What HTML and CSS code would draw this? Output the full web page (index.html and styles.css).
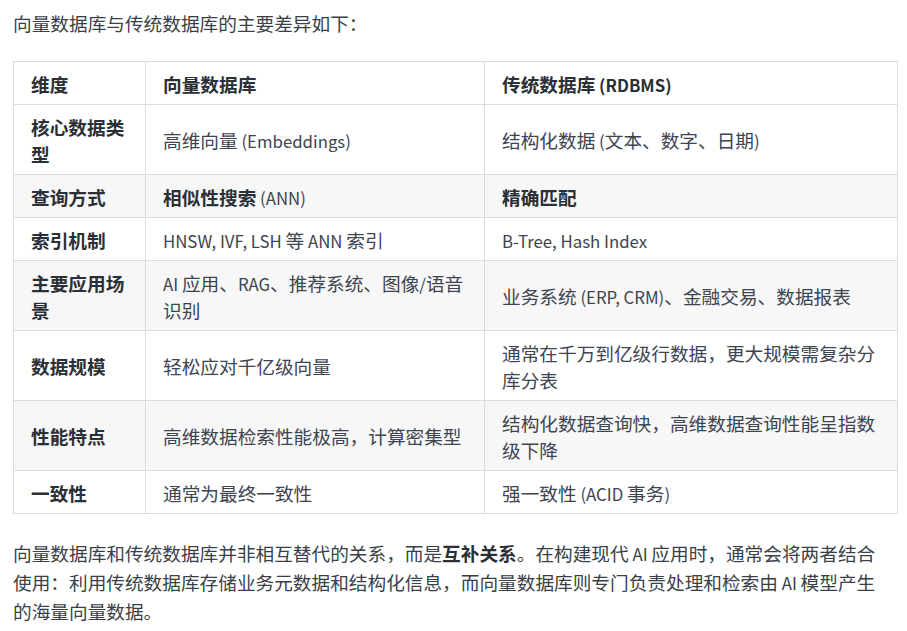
FILE: index.html
```html
<!DOCTYPE html>
<html lang="zh-CN">
<head>
<meta charset="utf-8">
<title>向量数据库与传统数据库</title>
<link rel="stylesheet" href="styles.css">
</head>
<body>
<div class="content">
  <p class="intro">向量数据库与传统数据库的主要差异如下：</p>
  <table class="compare">
    <colgroup>
      <col class="c1">
      <col class="c2">
      <col class="c3">
    </colgroup>
    <thead>
      <tr><th>维度</th><th>向量数据库</th><th>传统数据库<span class="lat"> (RDBMS)</span></th></tr>
    </thead>
    <tbody>
      <tr><td class="dim">核心数据类型</td><td>高维向量<span class="lat"> (Embeddings)</span></td><td>结构化数据<span class="lat"> (</span>文本、数字、日期<span class="lat">)</span></td></tr>
      <tr><td class="dim">查询方式</td><td><strong>相似性搜索</strong><span class="lat"> (ANN)</span></td><td><strong>精确匹配</strong></td></tr>
      <tr><td class="dim">索引机制</td><td><span class="lat">HNSW, IVF, LSH </span>等<span class="lat"> ANN </span>索引</td><td><span class="lat">B-Tree, Hash Index</span></td></tr>
      <tr><td class="dim">主要应用场景</td><td><span class="lat">AI </span>应用、<span class="lat">RAG</span>、推荐系统、图像<span class="lat">/</span>语音识别</td><td>业务系统<span class="lat"> (ERP, CRM)</span>、金融交易、数据报表</td></tr>
      <tr><td class="dim">数据规模</td><td>轻松应对千亿级向量</td><td>通常在千万到亿级行数据，更大规模需复杂分库分表</td></tr>
      <tr><td class="dim">性能特点</td><td>高维数据检索性能极高，计算密集型</td><td>结构化数据查询快，高维数据查询性能呈指数级下降</td></tr>
      <tr><td class="dim">一致性</td><td>通常为最终一致性</td><td>强一致性<span class="lat"> (ACID </span>事务<span class="lat">)</span></td></tr>
    </tbody>
  </table>
  <p class="outro">向量数据库和传统数据库并非相互替代的关系，而是<strong>互补关系</strong>。在构建现代<span class="lat"> AI </span>应用时，通常会将两者结合使用：利用传统数据库存储业务元数据和结构化信息，而向量数据库则专门负责处理和检索由<span class="lat"> AI </span>模型产生的海量向量数据。</p>
</div>
</body>
</html>
```

FILE: styles.css
```css
html, body {
  margin: 0;
  padding: 0;
  background: #ffffff;
}

body {
  font-family: "Noto Sans CJK SC", "Noto Sans", sans-serif;
  font-size: 18.67px;
  line-height: 29px;
  color: #3a3f48;
}

.content {
  padding: 8px 10px 0 13px;
}

.intro {
  margin: 0 0 24px 0;
}

.outro {
  margin: 24px 8px 0 0;
}

.lat {
  font-size: 0.9em;
  line-height: 1;
}

strong {
  font-weight: 700;
  color: #2b2f36;
}

.compare {
  width: 884px;
  border-collapse: collapse;
  table-layout: fixed;
  line-height: 27px;
}

.c1 { width: 132px; }
.c2 { width: 339px; }
.c3 { width: 413px; }

.compare th,
.compare td {
  border: 1px solid #dcdcdc;
  padding: 7.5px 17px;
  text-align: left;
  vertical-align: middle;
}

.compare th {
  font-weight: 700;
  color: #2b2f36;
  background: #ffffff;
}

.compare td {
  color: #3e4450;
}

.compare td.dim {
  font-weight: 700;
  color: #2b2f36;
}

.compare tbody tr:nth-child(even) {
  background: #f7f7f7;
}
```
